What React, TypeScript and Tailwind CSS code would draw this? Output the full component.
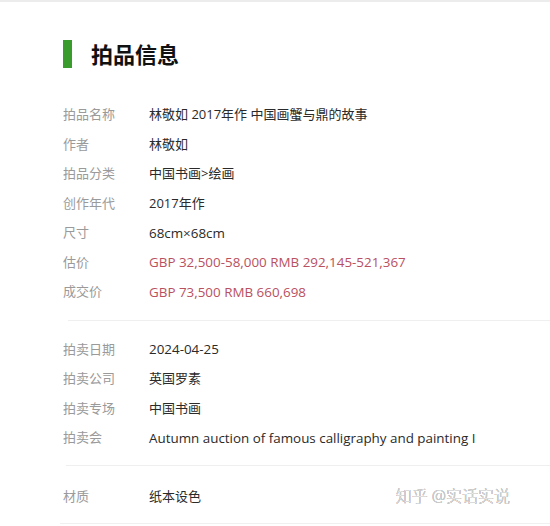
import React from "react";

type Row = { label: string; value: string; red?: boolean; latin?: boolean };

const sec1: Row[] = [
  { label: "拍品名称", value: "林敬如 2017年作 中国画蟹与鼎的故事" },
  { label: "作者", value: "林敬如" },
  { label: "拍品分类", value: "中国书画>绘画" },
  { label: "创作年代", value: "2017年作" },
  { label: "尺寸", value: "68cm×68cm", latin: true },
  { label: "估价", value: "GBP 32,500-58,000 RMB 292,145-521,367", red: true, latin: true },
  { label: "成交价", value: "GBP 73,500 RMB 660,698", red: true, latin: true },
];

const sec2: Row[] = [
  { label: "拍卖日期", value: "2024-04-25", latin: true },
  { label: "拍卖公司", value: "英国罗素" },
  { label: "拍卖专场", value: "中国书画" },
  { label: "拍卖会", value: "Autumn auction of famous calligraphy and painting I", latin: true },
];

const font = {
  fontFamily: '"Open Sans", "Noto Sans CJK SC", "Noto Sans", sans-serif',
};

function InfoRow({ r }: { r: Row }) {
  const color = r.red ? "text-[#b9505f]" : "text-[#2a2a2a]";
  return (
    <div className="flex h-[29.5px] items-center pl-[63px] text-[13px]">
      <div className="w-[86px] shrink-0 text-[#9a9a9a]">{r.label}</div>
      <div className={r.latin ? `${color} text-[13.4px]` : color}>{r.value}</div>
    </div>
  );
}

export default function App() {
  return (
    <div className="relative h-[526px] w-[550px] overflow-hidden bg-white" style={font}>
      <div className="h-[2px] bg-[#ececec]" />
      <div className="mt-[38px] flex h-[28px] items-center pl-[63px]">
        <div className="h-[28px] w-[9px] bg-[#3a9c2c]" />
        <div className="ml-[19px] text-[22px] font-bold leading-none text-[#111]">拍品信息</div>
      </div>
      <div className="mt-[32px]">
        {sec1.map((r) => (
          <InfoRow key={r.label} r={r} />
        ))}
      </div>
      <div className="ml-[68px] mt-[13px] h-px bg-[#efefef]" />
      <div className="mt-[14px]">
        {sec2.map((r) => (
          <InfoRow key={r.label} r={r} />
        ))}
      </div>
      <div className="ml-[66px] mt-[12px] h-px bg-[#efefef]" />
      <div className="mt-[16px] flex h-[29.5px] items-center pl-[63px] text-[13px]">
        <div className="w-[86px] shrink-0 text-[#9a9a9a]">材质</div>
        <div className="text-[#2a2a2a]">纸本设色</div>
        <div
          className="ml-auto pr-[40px] text-[16px] font-light text-[#ececec]"
          style={{ textShadow: "0 0 0.6px #777, 0 0 0.6px #777" }}
        >
          知乎 @实话实说
        </div>
      </div>
      <div className="absolute bottom-[2px] left-[60px] right-0 h-px bg-[#f0f0f0]" />
    </div>
  );
}
